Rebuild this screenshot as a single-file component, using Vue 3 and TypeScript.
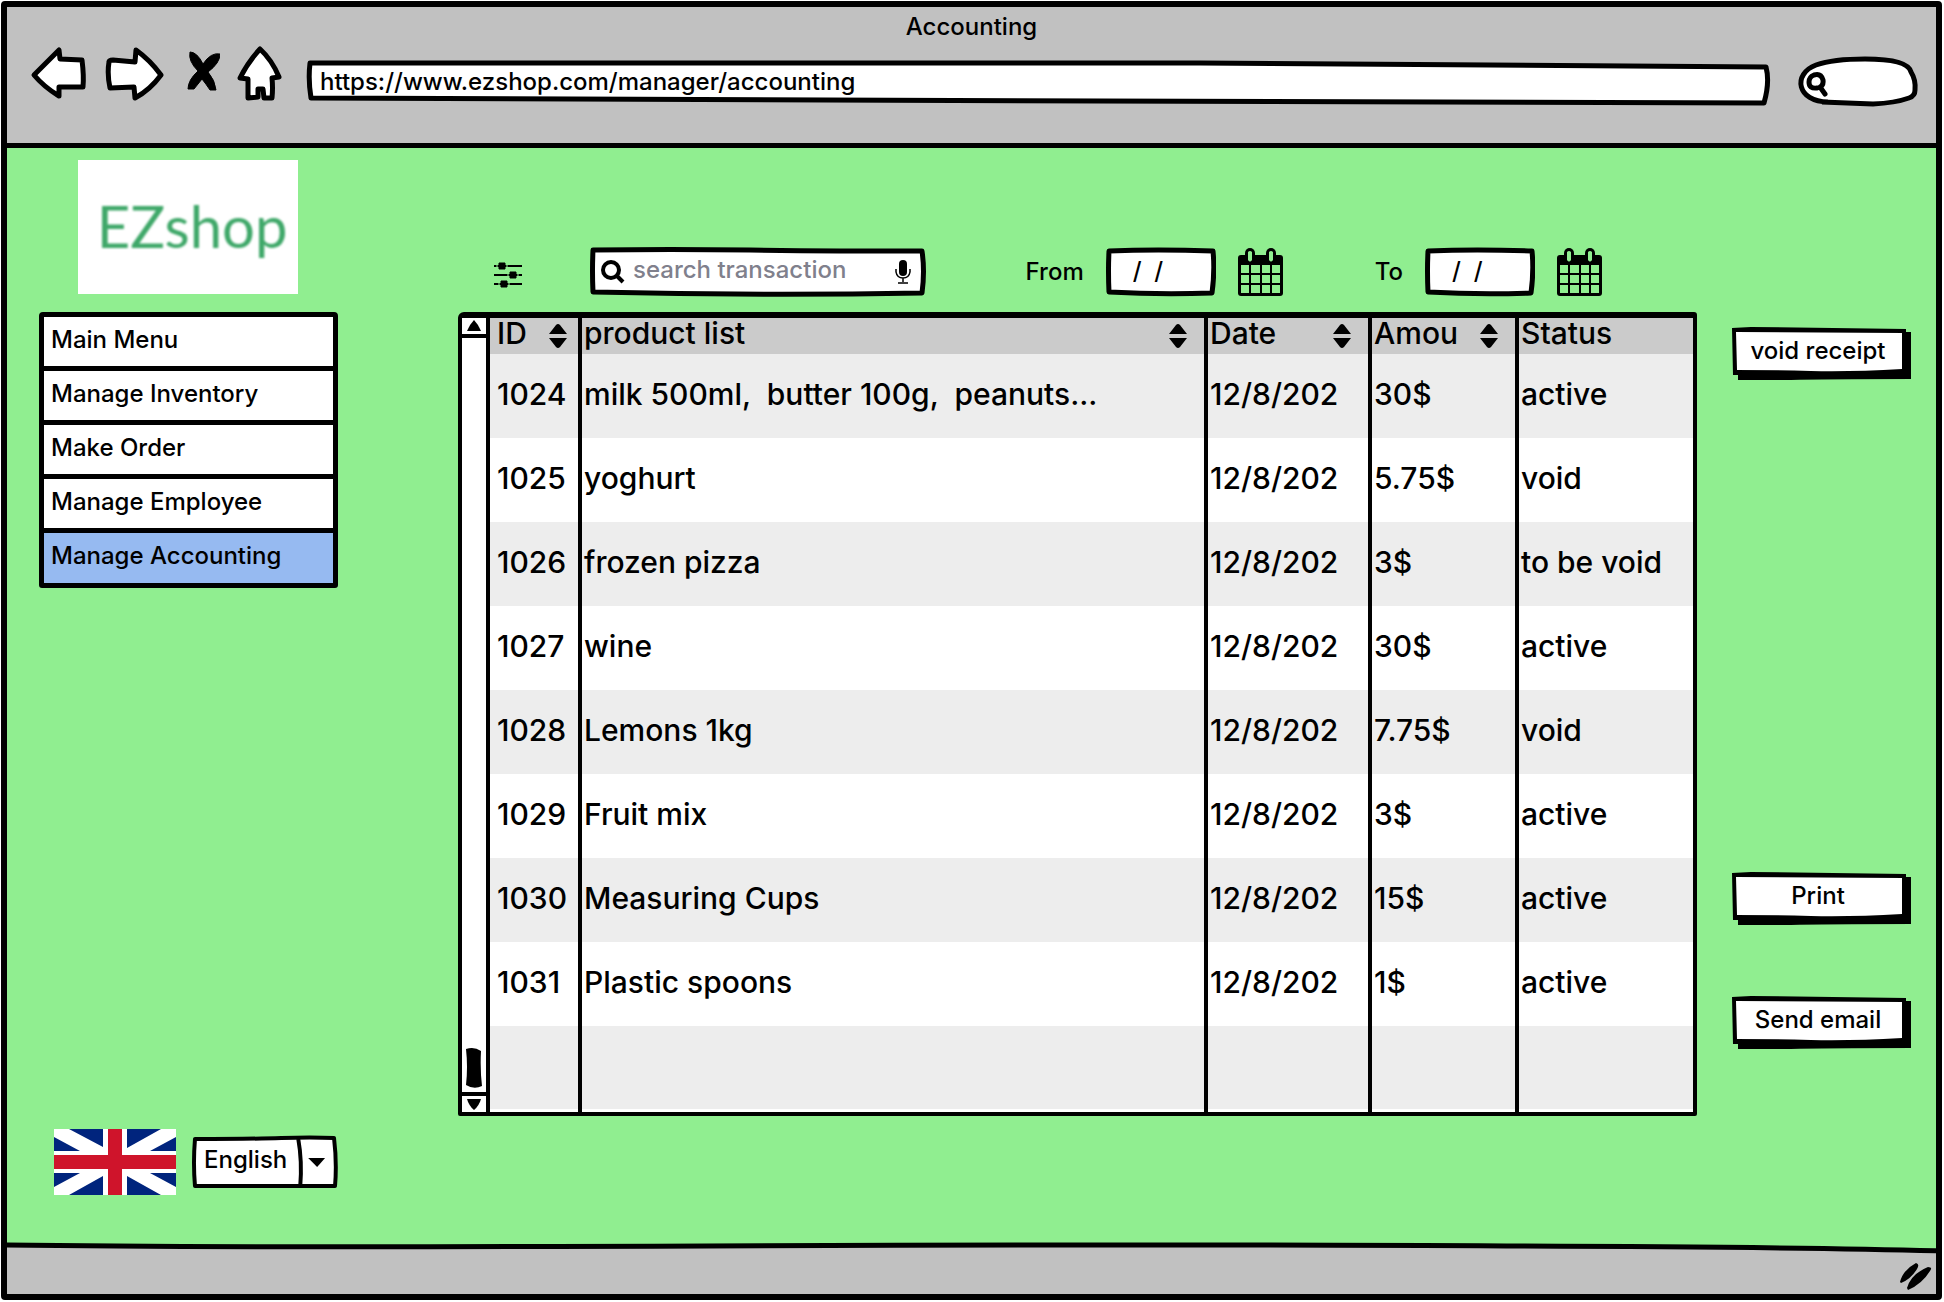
<script setup lang="ts">
import { ref } from 'vue'

interface Transaction {
  id: number
  products: string
  date: string
  amount: string
  status: string
}

const pageUrl = ref('https://www.ezshop.com/manager/accounting')
const webSearch = ref('')
const query = ref('')
const from = ref('/  /')
const to = ref('/  /')
const language = ref('English')

const menu = [
  { label: 'Main Menu', active: false },
  { label: 'Manage Inventory', active: false },
  { label: 'Make Order', active: false },
  { label: 'Manage Employee', active: false },
  { label: 'Manage Accounting', active: true },
]

const columns = [
  { key: 'id', label: 'ID', sortable: true },
  { key: 'products', label: 'product list', sortable: true },
  { key: 'date', label: 'Date', sortable: true },
  { key: 'amount', label: 'Amou', sortable: true },
  { key: 'status', label: 'Status', sortable: false },
]

const transactions: Transaction[] = [
  { id: 1024, products: 'milk 500ml,  butter 100g,  peanuts...', date: '12/8/202', amount: '30$', status: 'active' },
  { id: 1025, products: 'yoghurt', date: '12/8/202', amount: '5.75$', status: 'void' },
  { id: 1026, products: 'frozen pizza', date: '12/8/202', amount: '3$', status: 'to be void' },
  { id: 1027, products: 'wine', date: '12/8/202', amount: '30$', status: 'active' },
  { id: 1028, products: 'Lemons 1kg', date: '12/8/202', amount: '7.75$', status: 'void' },
  { id: 1029, products: 'Fruit mix', date: '12/8/202', amount: '3$', status: 'active' },
  { id: 1030, products: 'Measuring Cups', date: '12/8/202', amount: '15$', status: 'active' },
  { id: 1031, products: 'Plastic spoons', date: '12/8/202', amount: '1$', status: 'active' },
]
</script>

<template>
  <div class="window">
    <header class="chrome">
      <div class="title">Accounting</div>
      <div class="toolbar">
        <button class="nav" type="button" aria-label="Back">
          <svg width="58" height="64" viewBox="0 0 58 64">
            <path d="M4 29 29 4 30 13 52 14Q54 30 53 41L29 41 29 50Q14 41 4 29Z" />
          </svg>
        </button>
        <button class="nav" type="button" aria-label="Forward">
          <svg width="60" height="64" viewBox="0 0 60 64">
            <path d="M5 16Q5 14 9 14L31 16 32 4Q46 14 57 29Q46 44 31 52L30 41 6 42Q3 28 5 16Z" />
          </svg>
        </button>
        <button class="nav" type="button" aria-label="Stop">
          <svg class="solid" width="40" height="64" viewBox="0 0 40 64">
            <path d="M10 6Q17 6 23 18Q31 6 40 8Q40 17 28 26Q35 34 36 44L30 44Q26 38 22 33Q18 38 14 43L8 43Q8 34 18 25Q8 15 10 6Z" />
          </svg>
        </button>
        <button class="nav" type="button" aria-label="Home">
          <svg width="48" height="64" viewBox="0 0 48 64">
            <path d="M24 3Q36 14 43 31L36 32Q37 42 36 52L28 52 27 43 22 43 22 51 12 52 12 33 4 32Q12 16 24 3Z" />
          </svg>
        </button>
        <input v-model="pageUrl" class="address" type="text" aria-label="Address" />
        <label class="web-search">
          <svg width="26" height="28" viewBox="0 0 26 28" aria-hidden="true">
            <path d="M10 5Q17 3 19 10Q20 17 13 18Q5 19 5 12Q5 7 10 5ZM16 17 21 24" />
          </svg>
          <input v-model="webSearch" type="text" aria-label="Web search" />
        </label>
      </div>
    </header>

    <main class="page">
      <aside class="sidebar">
        <div class="logo"><span>EZshop</span></div>
        <nav class="menu">
          <a v-for="item in menu" :key="item.label" href="#" :class="{ active: item.active }">{{ item.label }}</a>
        </nav>
        <div class="language">
          <svg width="122" height="66" viewBox="0 0 122 66" role="img" aria-label="British flag">
            <path fill="#fff" d="M0 0H122V66H0Z" />
            <path
              fill="#00247d"
              d="M15 0H49V18ZM0 8V22H26ZM73 0H107L73 19ZM122 8V22H96ZM0 44H26L0 58ZM49 47V66H15ZM73 47V66H107ZM96 44H122V58Z"
            />
            <path fill="#cf142b" d="M54 0H68V26H122V40H68V66H54V40H0V26H54Z" />
          </svg>
          <select v-model="language" aria-label="Language">
            <option>English</option>
          </select>
        </div>
      </aside>

      <section class="content">
        <div class="filters">
          <button class="icon" type="button" aria-label="Filter options">
            <svg width="28" height="32" viewBox="0 -6 28 32">
              <path d="M0 4H28M0 13H28M0 22H28" stroke="#000" stroke-width="2" />
              <path d="M5 1H11V7H5ZM16 10H22V16H16ZM7 19H13V25H7Z" stroke="#000" />
              <path d="M3 2V6M13 2V6M14 11V15M24 11V15M5 20V24M15 20V24" stroke="#90ee90" />
            </svg>
          </button>
          <label class="search">
            <svg width="24" height="24" viewBox="0 0 24 24" aria-hidden="true">
              <circle cx="10" cy="10" r="8" fill="none" stroke="#000" stroke-width="4" />
              <path d="M15 15 22 22" stroke="#000" stroke-width="4" />
            </svg>
            <input v-model="query" type="text" placeholder="search transaction" aria-label="search transaction" />
            <button class="icon" type="button" aria-label="Voice search">
              <svg width="16" height="24" viewBox="0 0 16 24">
                <rect x="4" y="0" width="8" height="16" rx="4" />
                <path d="M1 9V12Q2 18 8 18T15 12V9M8 18V22M3 23H13" fill="none" stroke="#000" stroke-width="1.5" />
              </svg>
            </button>
          </label>
          <div class="dates">
            <div class="date">
              <label for="from">From</label>
              <input id="from" v-model="from" type="text" />
              <button class="icon" type="button" aria-label="Pick start date">
                <svg width="45" height="48" viewBox="0 0 45 48">
                  <rect y="7" width="45" height="41" rx="3" />
                  <rect x="7" width="10" height="16" rx="5" /><rect x="28" width="10" height="16" rx="5" />
                  <path fill="#90ee90" d="M10 4Q12 2 14 4V12Q12 15 10 12ZM31 4Q33 2 35 4V12Q33 15 31 12ZM3 17H11V25H3ZM13 17H22V25H13ZM24 17H32V25H24ZM34 17H42V25H34ZM3 27H11V35H3ZM13 27H22V35H13ZM24 27H32V35H24ZM34 27H42V35H34ZM3 37H11V45H3ZM13 37H22V45H13ZM24 37H32V45H24ZM34 37H42V45H34Z" />
                </svg>
              </button>
            </div>
            <div class="date">
              <label for="to">To</label>
              <input id="to" v-model="to" type="text" />
              <button class="icon" type="button" aria-label="Pick end date">
                <svg width="45" height="48" viewBox="0 0 45 48">
                  <rect y="7" width="45" height="41" rx="3" />
                  <rect x="7" width="10" height="16" rx="5" /><rect x="28" width="10" height="16" rx="5" />
                  <path fill="#90ee90" d="M10 4Q12 2 14 4V12Q12 15 10 12ZM31 4Q33 2 35 4V12Q33 15 31 12ZM3 17H11V25H3ZM13 17H22V25H13ZM24 17H32V25H24ZM34 17H42V25H34ZM3 27H11V35H3ZM13 27H22V35H13ZM24 27H32V35H24ZM34 27H42V35H34ZM3 37H11V45H3ZM13 37H22V45H13ZM24 37H32V45H24ZM34 37H42V45H34Z" />
                </svg>
              </button>
            </div>
          </div>
        </div>

        <div class="listing">
          <div class="scrollbar">
            <button type="button" aria-label="Scroll up">
              <svg width="16" height="12" viewBox="0 0 16 12"><path d="M1 11Q4 4 8 0Q12 4 15 11Z" /></svg>
            </button>
            <div class="track">
              <svg width="16" height="42" viewBox="0 0 16 42">
                <path d="M0 2Q8-1 15 4Q14 22 16 39Q8 43 0 38Q2 20 0 2Z" />
              </svg>
            </div>
            <button type="button" aria-label="Scroll down">
              <svg width="16" height="12" viewBox="0 0 16 12"><path d="M1 1H15Q13 8 8 12Q3 8 1 1Z" /></svg>
            </button>
          </div>
          <table>
            <colgroup>
              <col v-for="c in columns" :key="c.key" :class="'col-' + c.key" />
            </colgroup>
            <thead>
              <tr>
                <th v-for="c in columns" :key="c.key" scope="col">
                  <div class="head">
                    <span>{{ c.label }}</span>
                    <button v-if="c.sortable" class="icon" type="button" :aria-label="'Sort by ' + c.label">
                      <svg width="18" height="24" viewBox="0 0 18 24">
                        <path d="M0 10 7 1Q9-1 11 1L18 10ZM0 14H18L11 23Q9 25 7 23Z" />
                      </svg>
                    </button>
                  </div>
                </th>
              </tr>
            </thead>
            <tbody>
              <tr v-for="t in transactions" :key="t.id">
                <td>{{ t.id }}</td>
                <td>{{ t.products }}</td>
                <td>{{ t.date }}</td>
                <td>{{ t.amount }}</td>
                <td>{{ t.status }}</td>
              </tr>
              <tr class="blank">
                <td v-for="c in columns" :key="c.key"></td>
              </tr>
            </tbody>
          </table>
        </div>
      </section>

      <aside class="actions">
        <button type="button">void receipt</button>
        <button class="print" type="button">Print</button>
        <button type="button">Send email</button>
      </aside>
    </main>

    <footer class="status">
      <svg width="34" height="28" viewBox="0 0 34 28" aria-hidden="true">
        <path d="M1 20Q4 8 17 1Q21 2 18 7Q12 17 2 21ZM8 26Q12 12 29 5Q34 5 31 9Q23 22 9 28Z" />
      </svg>
    </footer>
  </div>
</template>

<style>
body {
  margin: 0;
  background: #fff;
}
</style>

<style scoped>
* {
  box-sizing: border-box;
}

.window {
  display: flex;
  flex-direction: column;
  min-height: calc(100vh - 3px);
  margin: 1px 2px 1px 1px;
  border: 6px solid #000;
  border-radius: 4px;
  background: #90ee90;
  color: #000;
  font: 500 24px/30px Inter, 'Liberation Sans', sans-serif;
}

button,
input,
select {
  margin: 0;
  padding: 0;
  border: 0;
  outline: 0;
  background: none;
  color: inherit;
  font: inherit;
}

svg {
  display: block;
}

.chrome {
  background: #c1c1c1;
  border-bottom: 5px solid #000;
  padding-bottom: 33px;
}

.title {
  line-height: 39px;
  text-align: center;
}

.toolbar {
  display: flex;
  gap: 16px;
  padding: 0 15px 0 23px;
}

.nav svg {
  fill: #fff;
  stroke: #000;
  stroke-width: 5px;
  stroke-linejoin: round;
}

.nav .solid {
  fill: #000;
  stroke-width: 1px;
}

.address {
  flex: 1;
  min-width: 0;
  height: 64px;
  padding: 6px 20px 0 20px;
  background: url("data:image/svg+xml,%3Csvg xmlns='http://www.w3.org/2000/svg' viewBox='0 0 1479 64' preserveAspectRatio='none'%3E%3Cpath d='M10 17Q600 16 900 17T1466 21Q1470 36 1464 57Q1100 57 800 55T11 52Q8 34 10 17Z' fill='white' stroke='black' stroke-width='5' stroke-linejoin='round'/%3E%3C/svg%3E") 0 0 / 100% 100% no-repeat;
}

.web-search {
  display: flex;
  align-items: center;
  width: 126px;
  height: 64px;
  padding: 12px 12px 0 9px;
  background: url("data:image/svg+xml,%3Csvg xmlns='http://www.w3.org/2000/svg' viewBox='0 0 126 64' preserveAspectRatio='none'%3E%3Cpath d='M33 56C2 56 -3 28 21 19Q38 13 70 13Q113 13 116 26Q121 34 120 44Q120 50 114 52Q100 57 78 58Q50 57 27 56' fill='white' stroke='black' stroke-width='5' stroke-linejoin='round'/%3E%3C/svg%3E") 0 0 / 100% 100% no-repeat;
}

.web-search svg {
  fill: none;
  stroke: #000;
  stroke-width: 5px;
  stroke-linecap: round;
}

.web-search input {
  flex: 1;
  min-width: 0;
}

.page {
  flex: 1;
  display: grid;
  grid-template-columns: 299px minmax(0, 1fr) 180px;
  padding: 0 25px 0 32px;
}

.sidebar {
  display: flex;
  flex-direction: column;
  padding: 12px 0 44px;
}

.logo {
  display: flex;
  justify-content: flex-end;
  align-self: center;
  width: 220px;
  height: 134px;
  margin: 0 2px 18px 0;
  padding: 26px 10px 0 0;
  background: #fff;
  color: #3fa869;
  font: 58px/80px Lato, sans-serif;
}

.logo span {
  filter: blur(1px);
}

.menu {
  display: flex;
  flex-direction: column;
  border: 5px solid #000;
  border-radius: 4px 4px 3px 3px;
  background: #fff;
}

.menu a {
  height: 54px;
  padding: 8px 7px;
  border-bottom: 5px solid #000;
  color: #000;
  text-decoration: none;
}

.menu a:last-child {
  border-bottom: 0;
  height: 50px;
}

.menu .active {
  background: #96baf1;
}

.language {
  display: flex;
  align-items: center;
  gap: 16px;
  margin-top: auto;
  padding-left: 15px;
}

.language select {
  appearance: none;
  flex: 1;
  min-width: 0;
  height: 54px;
  padding: 0 40px 4px 12px;
  background: url("data:image/svg+xml,%3Csvg xmlns='http://www.w3.org/2000/svg' viewBox='0 0 147 54' preserveAspectRatio='none'%3E%3Cpath d='M3 4Q60 4 90 3T143 3Q146 28 144 51H3Q1 28 3 4Z' fill='white' stroke='black' stroke-width='4' stroke-linejoin='round'/%3E%3Cpath d='M107 4Q111 26 109 51' fill='none' stroke='black' stroke-width='4'/%3E%3Cpath d='M117 23H134L126 32Z'/%3E%3C/svg%3E") 0 0 / 100% 100% no-repeat;
}

.content {
  padding: 98px 34px 0 120px;
}

.filters {
  display: flex;
  align-items: center;
  height: 66px;
  padding: 0 95px 14px 36px;
}

.icon {
  flex: none;
}

.search {
  display: flex;
  align-items: center;
  gap: 8px;
  width: 336px;
  height: 50px;
  margin-left: 68px;
  padding: 0 15px 0 11px;
  background: url("data:image/svg+xml,%3Csvg xmlns='http://www.w3.org/2000/svg' viewBox='0 0 336 50' preserveAspectRatio='none'%3E%3Cpath d='M3 3Q80 2 160 3T332 4Q335 24 332 46Q170 49 3 45Q2 24 3 3Z' fill='white' stroke='black' stroke-width='5' stroke-linejoin='round'/%3E%3C/svg%3E") 0 0 / 100% 100% no-repeat;
}

.search input {
  flex: 1;
  min-width: 0;
  height: 40px;
  padding-bottom: 6px;
}

.search input::placeholder {
  color: #80808c;
  opacity: 1;
}

.dates {
  display: flex;
  gap: 92px;
  margin-left: auto;
}

.date {
  display: flex;
  align-items: center;
  gap: 22px;
}

.date input {
  width: 110px;
  height: 50px;
  padding: 0 12px 4px 27px;
  background: url("data:image/svg+xml,%3Csvg xmlns='http://www.w3.org/2000/svg' viewBox='0 0 110 50' preserveAspectRatio='none'%3E%3Cpath d='M3 4Q50 2 107 4Q109 24 106 46Q55 48 3 45Q2 24 3 4Z' fill='white' stroke='black' stroke-width='5' stroke-linejoin='round'/%3E%3C/svg%3E") 0 0 / 100% 100% no-repeat;
}

.listing {
  display: flex;
  border: 4px solid #000;
  border-top-width: 6px;
  border-radius: 6px 3px 2px 2px;
  background: #fff;
}

.scrollbar {
  display: flex;
  flex-direction: column;
  width: 28px;
  border-right: 4px solid #000;
}

.scrollbar button {
  display: flex;
  align-items: center;
  justify-content: center;
  height: 16px;
}

.track {
  flex: 1;
  display: flex;
  align-items: flex-end;
  justify-content: center;
  border: solid #000;
  border-width: 4px 0;
  padding-bottom: 3px;
}

table {
  flex: 1;
  table-layout: fixed;
  width: 100%;
  border-collapse: separate;
  border-spacing: 0;
  font-size: 30px;
  line-height: 36px;
}

.col-id {
  width: 92px;
}

.col-date {
  width: 164px;
}

.col-amount {
  width: 147px;
}

.col-status {
  width: 174px;
}

th {
  height: 36px;
  padding: 0 17px 0 2px;
  background: #cbcbcb;
  border-right: 4px solid #000;
  font-weight: 500;
}

.head {
  display: flex;
  align-items: center;
  justify-content: space-between;
  height: 36px;
}

.head span {
  padding-bottom: 6px;
}

td {
  height: 84px;
  padding: 0 0 5px 2px;
  border-right: 4px solid #000;
  white-space: pre;
}

th:first-child,
td:first-child {
  padding-left: 7px;
}

th:first-child {
  padding-right: 11px;
}

th:last-child,
td:last-child {
  border-right: 0;
}

tbody tr:nth-child(odd) {
  background: #ededed;
}

.blank td {
  height: 86px;
  box-shadow: inset 0 -3px #fff;
}

.actions {
  display: flex;
  flex-direction: column;
  padding: 179px 0 189px;
}

.actions button {
  height: 54px;
  padding: 0 6px 6px 0;
  background: url("data:image/svg+xml,%3Csvg xmlns='http://www.w3.org/2000/svg' viewBox='0 0 180 54' preserveAspectRatio='none'%3E%3Cpath d='M1 1L20 0 175 2V5H180V52Q90 52 60 53H7V48H2Z'/%3E%3Cpath d='M5 5 171 6V42Q120 45 80 44T6 43Z' fill='white'/%3E%3C/svg%3E") 0 0 / 100% 100% no-repeat;
}

.actions .print {
  margin: auto 0 70px;
}

.status {
  display: flex;
  align-items: flex-end;
  justify-content: flex-end;
  height: 55px;
  padding: 0 3px 4px 0;
  background: url("data:image/svg+xml,%3Csvg xmlns='http://www.w3.org/2000/svg' viewBox='0 0 1930 55' preserveAspectRatio='none'%3E%3Cpath d='M-5 6Q200 9 700 7T1500 7Q1800 8 1935 12V60H-5Z' fill='%23c1c1c1' stroke='black' stroke-width='5'/%3E%3C/svg%3E") 0 0 / 100% 100% no-repeat;
}
</style>
